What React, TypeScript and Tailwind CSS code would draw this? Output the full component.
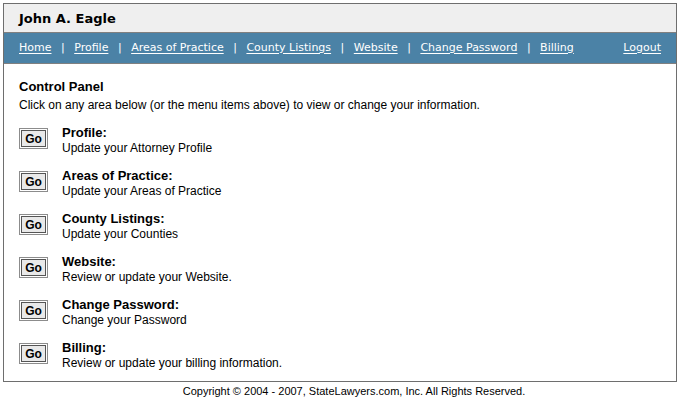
import type { ReactNode } from "react";

const menu = [
  "Home",
  "Profile",
  "Areas of Practice",
  "County Listings",
  "Website",
  "Change Password",
  "Billing",
];

const areas = [
  { title: "Profile:", text: "Update your Attorney Profile" },
  { title: "Areas of Practice:", text: "Update your Areas of Practice" },
  { title: "County Listings:", text: "Update your Counties" },
  { title: "Website:", text: "Review or update your Website." },
  { title: "Change Password:", text: "Change your Password" },
  { title: "Billing:", text: "Review or update your billing information." },
];

function GoButton() {
  return (
    <button
      type="button"
      className="mt-[3px] flex h-[21px] w-[29px] shrink-0 border border-[#8c8c8c] bg-white p-px"
    >
      <span className="flex h-full w-full items-center justify-center border border-[#555] bg-[#e9e9e9] text-[12px] leading-none font-bold text-black">
        Go
      </span>
    </button>
  );
}

function NavLink({ children }: { children: ReactNode }) {
  return (
    <a href="#" className="text-white underline underline-offset-2">
      {children}
    </a>
  );
}

export default function App() {
  return (
    <div className="min-h-[400px] bg-white px-[3px] pt-[3px] font-['Liberation_Sans',Arial,sans-serif] text-black">
      <div className="border border-[#6e6e6e]">
        <div className="flex h-[29px] items-center border-b border-[#808080] bg-[#efefef] pt-[2px] pl-[15px] font-['DejaVu_Sans',Verdana,sans-serif] text-[13px] font-bold">
          John A. Eagle
        </div>
        <div className="flex h-[31px] items-center justify-between border-b border-[#808080] bg-[#4b82a6] px-[15px] font-['DejaVu_Sans',Verdana,sans-serif] text-[11px] text-white">
          <div className="flex items-center gap-[9.5px]">
            {menu.map((item, i) => (
              <span key={item} className="flex items-center gap-[9.5px]">
                {i > 0 && <span>|</span>}
                <NavLink>{item}</NavLink>
              </span>
            ))}
          </div>
          <NavLink>Logout</NavLink>
        </div>

        <div className="px-[15px] pt-[15px] pb-[10px]">
          <h1 className="text-[13px] leading-[16px] font-bold">Control Panel</h1>
          <p className="mt-[3px] text-[12px] leading-[15px]">
            Click on any area below (or the menu items above) to view or change your information.
          </p>

          <div className="mt-[12px] flex flex-col gap-[12px]">
            {areas.map((area) => (
              <div key={area.title} className="flex gap-[14px]">
                <GoButton />
                <div>
                  <div className="text-[13px] leading-[16px] font-bold">{area.title}</div>
                  <div className="text-[12px] leading-[15px]">{area.text}</div>
                </div>
              </div>
            ))}
          </div>
        </div>
      </div>

      <p className="mt-[2px] pl-[28px] text-center text-[11px] leading-[14px]">
        Copyright © 2004 - 2007, StateLawyers.com, Inc. All Rights Reserved.
      </p>
    </div>
  );
}
